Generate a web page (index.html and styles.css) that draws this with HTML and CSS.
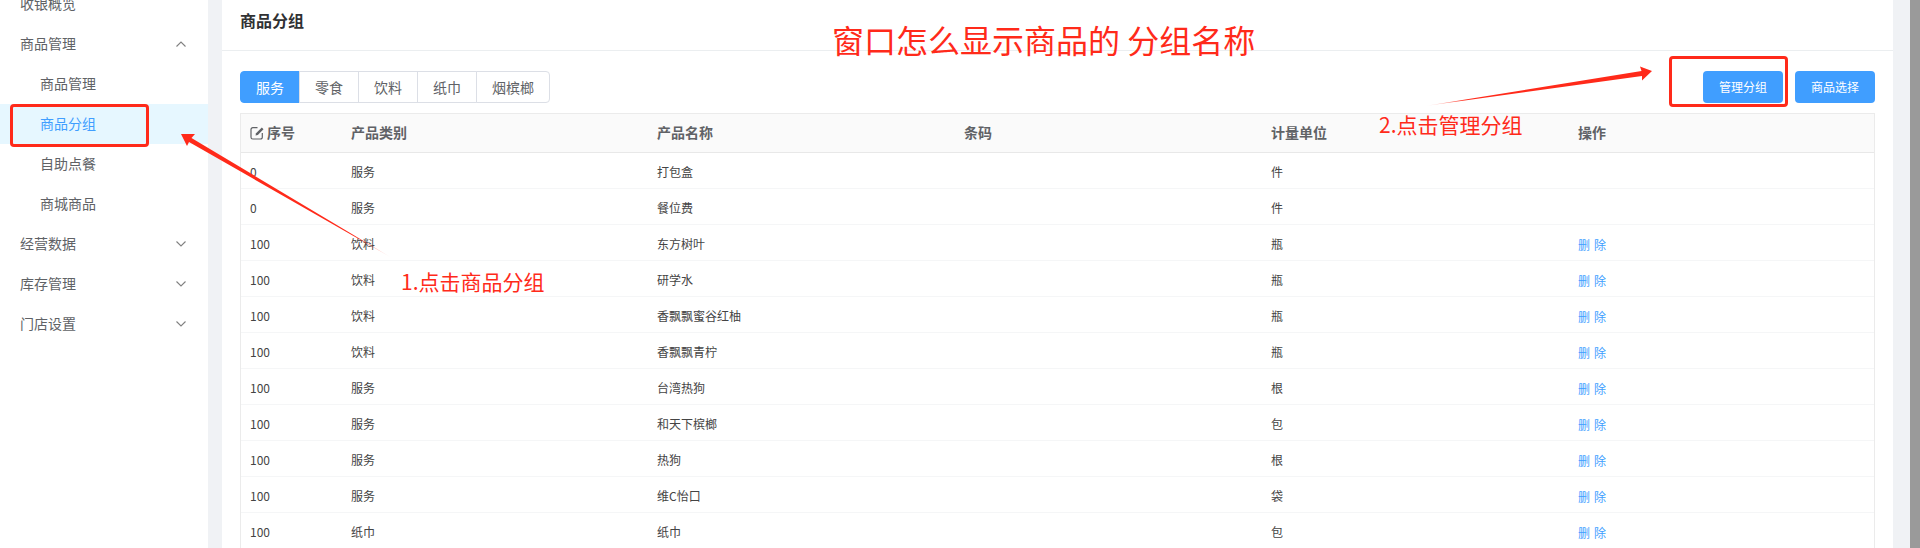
FILE: index.html
```html
<!DOCTYPE html>
<html lang="zh-CN">
<head>
<meta charset="utf-8">
<title>商品分组</title>
<link rel="stylesheet" href="styles.css">
</head>
<body>
<div class="app">
  <aside class="sidebar">
    <div class="nav-item first"><span>收银概览</span></div>
    <div class="nav-item"><span>商品管理</span><svg class="chev" viewBox="0 0 10 6"><path d="M.5 5.500 5 1l4.500 4.500"/></svg></div>
    <div class="nav-item sub"><span>商品管理</span></div>
    <div class="nav-item sub active"><span>商品分组</span></div>
    <div class="nav-item sub"><span>自助点餐</span></div>
    <div class="nav-item sub"><span>商城商品</span></div>
    <div class="nav-item"><span>经营数据</span><svg class="chev" viewBox="0 0 10 6"><path d="M.5.500 5 5 9.500.5"/></svg></div>
    <div class="nav-item"><span>库存管理</span><svg class="chev" viewBox="0 0 10 6"><path d="M.5.500 5 5 9.500.5"/></svg></div>
    <div class="nav-item"><span>门店设置</span><svg class="chev" viewBox="0 0 10 6"><path d="M.5.500 5 5 9.500.5"/></svg></div>
  </aside>
  <main class="panel">
    <header class="panel-head">商品分组</header>
    <div class="panel-body">
      <div class="toolbar">
        <div class="tabs">
          <button class="tab on">服务</button>
          <button class="tab">零食</button>
          <button class="tab">饮料</button>
          <button class="tab">纸巾</button>
          <button class="tab">烟槟榔</button>
        </div>
        <div class="actions">
          <button class="btn">管理分组</button>
          <button class="btn">商品选择</button>
        </div>
      </div>
      <table class="grid">
        <colgroup>
          <col class="c1"><col class="c2"><col class="c3"><col class="c3"><col class="c3"><col>
        </colgroup>
        <thead>
          <tr>
            <th><span class="seq"><svg class="edit" viewBox="0 0 14 14"><path class="edit-box" d="M7.500 1.700H2.800A1.800 1.800 0 0 0 1 3.500v7.700A1.800 1.800 0 0 0 2.800 13h7.700a1.800 1.800 0 0 0 1.800-1.800V7"/><path class="edit-pen" d="M5.500 9.500l.6-2.300L11.800 1.500 13.500 3.200 7.800 8.900z"/></svg>序号</span></th>
            <th>产品类别</th><th>产品名称</th><th>条码</th><th>计量单位</th><th>操作</th>
          </tr>
        </thead>
        <tbody>
          <tr><td>0</td><td>服务</td><td>打包盒</td><td></td><td>件</td><td></td></tr>
          <tr><td>0</td><td>服务</td><td>餐位费</td><td></td><td>件</td><td></td></tr>
          <tr><td>100</td><td>饮料</td><td>东方树叶</td><td></td><td>瓶</td><td><a class="del"><span>删</span><span>除</span></a></td></tr>
          <tr><td>100</td><td>饮料</td><td>研学水</td><td></td><td>瓶</td><td><a class="del"><span>删</span><span>除</span></a></td></tr>
          <tr><td>100</td><td>饮料</td><td>香飘飘蜜谷红柚</td><td></td><td>瓶</td><td><a class="del"><span>删</span><span>除</span></a></td></tr>
          <tr><td>100</td><td>饮料</td><td>香飘飘青柠</td><td></td><td>瓶</td><td><a class="del"><span>删</span><span>除</span></a></td></tr>
          <tr><td>100</td><td>服务</td><td>台湾热狗</td><td></td><td>根</td><td><a class="del"><span>删</span><span>除</span></a></td></tr>
          <tr><td>100</td><td>服务</td><td>和天下槟榔</td><td></td><td>包</td><td><a class="del"><span>删</span><span>除</span></a></td></tr>
          <tr><td>100</td><td>服务</td><td>热狗</td><td></td><td>根</td><td><a class="del"><span>删</span><span>除</span></a></td></tr>
          <tr><td>100</td><td>服务</td><td>维C怡口</td><td></td><td>袋</td><td><a class="del"><span>删</span><span>除</span></a></td></tr>
          <tr><td>100</td><td>纸巾</td><td>纸巾</td><td></td><td>包</td><td><a class="del"><span>删</span><span>除</span></a></td></tr>
        </tbody>
      </table>
    </div>
  </main>
  <div class="scrollbar"><div class="thumb"></div></div>
</div>

<div class="note note-title">窗口怎么显示商品的 分组名称</div>
<div class="note note-one">1.点击商品分组</div>
<div class="note note-two">2.点击管理分组</div>
<div class="mark mark-one"></div>
<div class="mark mark-two"></div>
<svg class="arrows" viewBox="0 0 1920 548">
  <defs>
    <linearGradient id="fade1" gradientUnits="userSpaceOnUse" x1="392" y1="258" x2="355" y2="236">
      <stop offset="0" stop-color="#ff2a1a" stop-opacity="0"/>
      <stop offset="1" stop-color="#ff2a1a"/>
    </linearGradient>
    <linearGradient id="fade2" gradientUnits="userSpaceOnUse" x1="1425" y1="106" x2="1465" y2="100">
      <stop offset="0" stop-color="#ff2a1a" stop-opacity="0"/>
      <stop offset="1" stop-color="#ff2a1a"/>
    </linearGradient>
  </defs>
  <path fill="url(#fade1)" d="M181 134 195 134 191.500 138 392 258 189 142 187 146z"/>
  <path fill="url(#fade2)" d="M1652 71 1640 66.500 1641.500 71 1425 106 1642 76 1642 80.500z"/>
</svg>
</body>
</html>
```
FILE: styles.css
```css
* { box-sizing: border-box; }
html, body { margin: 0; height: 548px; overflow: hidden; }
body {
  position: relative;
  background: #fff;
  font-family: "Noto Sans CJK SC", "Liberation Sans", sans-serif;
  color: #606266;
}
.app { display: flex; height: 548px; background: #f0f2f5; }

.sidebar { width: 208px; flex: none; background: #fff; }
.nav-item {
  height: 40px;
  padding: 0 22px 0 20px;
  display: flex;
  align-items: center;
  justify-content: space-between;
  font-size: 14px;
  color: #606266;
}
.nav-item span { margin-bottom: 2px; }
.nav-item.first { margin-top: -16px; }
.nav-item.sub { padding-left: 40px; }
.nav-item.active { background: #e6f7ff; color: #409eff; }
.chev { width: 10px; height: 6px; fill: none; stroke: #808080; stroke-width: 1.100; }

.panel { width: 1671px; margin-left: 14px; flex: none; background: #fff; }
.panel-head {
  height: 51px;
  padding: 0 18px;
  line-height: 41px;
  font-size: 16px;
  font-weight: 700;
  color: #303133;
  border-bottom: 1px solid #ebeef0;
}
.panel-body { padding: 20px 18px 0; }
.toolbar { display: flex; justify-content: space-between; height: 32px; }
.tabs { display: flex; }
.tab {
  width: 60px;
  height: 32px;
  padding: 0;
  margin: 0 0 0 -1px;
  font: inherit;
  font-size: 14px;
  color: #606266;
  background: #fff;
  border: 1px solid #dcdfe6;
}
.tab:first-child { margin-left: 0; border-radius: 4px 0 0 4px; }
.tab:last-child { width: 74px; border-radius: 0 4px 4px 0; }
.tab.on { color: #fff; background: #409eff; border-color: #409eff; }
.actions { display: flex; gap: 12px; }
.btn {
  width: 80px;
  height: 32px;
  padding: 0 0 2px;
  font: inherit;
  font-size: 12px;
  color: #fff;
  background: #409eff;
  border: 0;
  border-radius: 4px;
}

.grid {
  width: 1635px;
  margin-top: 10px;
  table-layout: fixed;
  border-collapse: separate;
  border-spacing: 0;
  border: solid #ebebeb;
  border-width: 1px 1px 0;
  font-size: 12px;
}
.c1 { width: 100px; }
.c2 { width: 306px; }
.c3 { width: 307px; }
.grid th {
  height: 39px;
  padding: 0 9px 3px;
  text-align: left;
  font-size: 14px;
  font-weight: 700;
  color: #606266;
  background: #fafafa;
  border-bottom: 1px solid #e8e8e8;
}
.grid th + th, .grid td + td { padding-left: 10px; }
.grid td {
  height: 36px;
  padding: 1px 9px 0;
  color: #444;
  border-bottom: 1px solid #f5f6f7;
}
.seq { display: flex; align-items: center; gap: 3px; }
.edit { width: 14px; height: 14px; flex: none; margin-top: 3px; }
.edit-box { fill: none; stroke: #606266; stroke-width: 1.200; }
.edit-pen { fill: #606266; }
.del { display: flex; gap: 4px; margin-top: 2px; color: #409eff; }

.scrollbar { width: 27px; flex: none; padding-left: 17px; display: flex; }
.thumb { width: 10px; background: #9a9a9a; }

.note {
  position: absolute;
  color: #ff2a1a;
  white-space: nowrap;
}
.note-title { left: 832px; top: 16px; font-size: 32px; line-height: 46px; }
.note-one { left: 401px; top: 266px; font-size: 21px; line-height: 30px; }
.note-two { left: 1379px; top: 109px; font-size: 21px; line-height: 30px; }
.mark {
  position: absolute;
  border: 3px solid #ff2a1a;
  border-radius: 4px;
}
.mark-one { left: 10px; top: 104px; width: 139px; height: 43px; }
.mark-two { left: 1669px; top: 56px; width: 119px; height: 51px; }
.arrows { position: absolute; left: 0; top: 0; width: 1920px; height: 548px; }
```
